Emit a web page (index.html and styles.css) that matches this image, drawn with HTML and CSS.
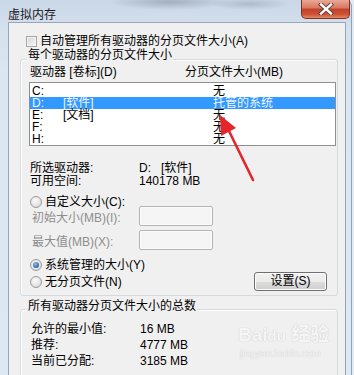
FILE: index.html
```html
<!DOCTYPE html>
<html lang="zh-CN">
<head>
    <meta charset="UTF-8">
    <meta name="viewport" content="width=device-width, initial-scale=1.0">
    <title>虚拟内存</title>
    <link rel="stylesheet" href="styles.css">
</head>
<body>
    <div class="window">
        <div class="titlebar">
            <span class="title">虚拟内存</span>
            <div class="close">
                <svg width="20" height="12" viewBox="0 0 20 12">
                    <path d="M5 1.5 L15 10.5 M15 1.5 L5 10.5" stroke="#5a3a36" stroke-width="4.2" stroke-linecap="square" fill="none"/>
                    <path d="M5 1.5 L15 10.5 M15 1.5 L5 10.5" stroke="#ffffff" stroke-width="2.4" stroke-linecap="square" fill="none"/>
                </svg>
            </div>
        </div>
        <div class="client">
            <div class="check-row">
                <span class="checkbox"></span>
                <span>自动管理所有驱动器的分页文件大小(A)</span>
            </div>

            <div class="group">
                <div class="group-title">每个驱动器的分页文件大小</div>
                <div class="list-head">
                    <span>驱动器 [卷标](D)</span>
                    <span>分页文件大小(MB)</span>
                </div>
                <div class="listbox">
                    <div class="item"><span>C:</span><span></span><span>无</span></div>
                    <div class="item selected"><span>D:</span><span>[软件]</span><span>托管的系统</span></div>
                    <div class="item"><span>E:</span><span>[文档]</span><span>无</span></div>
                    <div class="item"><span>F:</span><span></span><span>无</span></div>
                    <div class="item"><span>H:</span><span></span><span>无</span></div>
                </div>

                <div class="info">
                    <span>所选驱动器:</span><span>D:&nbsp;&nbsp;&nbsp;[软件]</span>
                    <span>可用空间:</span><span>140178 MB</span>
                </div>

                <div class="radio-row custom">
                    <span class="radio"></span>
                    <span>自定义大小(C):</span>
                </div>
                <div class="field-row">
                    <span class="field-label">初始大小(MB)(I):</span>
                    <span class="textbox"></span>
                </div>
                <div class="field-row second">
                    <span class="field-label">最大值(MB)(X):</span>
                    <span class="textbox"></span>
                </div>

                <div class="radio-row managed">
                    <span class="radio checked"></span>
                    <span>系统管理的大小(Y)</span>
                </div>
                <div class="button-row">
                    <div class="radio-row">
                        <span class="radio"></span>
                        <span>无分页文件(N)</span>
                    </div>
                    <div class="button">设置(S)</div>
                </div>
            </div>

            <div class="group totals">
                <div class="group-title">所有驱动器分页文件大小的总数</div>
                <div class="totals-list">
                    <span>允许的最小值:</span><span>16 MB</span>
                    <span>推荐:</span><span>4777 MB</span>
                    <span>当前已分配:</span><span>3185 MB</span>
                </div>
            </div>
        </div>
    </div>

    <!-- watermark -->
    <div class="watermark">
        <div class="wm-logo">Bai<span class="wm-du">du</span> 经验</div>
        <div class="wm-url">jingyan.baidu.com</div>
    </div>

    <!-- red arrow drawn over the screenshot -->
    <svg class="arrow" width="354" height="375" viewBox="0 0 354 375">
        <line x1="253" y1="180" x2="229" y2="131" stroke="#e3262b" stroke-width="2.6" stroke-linecap="round"/>
        <polygon points="220,115 236,128 221,136" fill="#e3262b"/>
    </svg>
</body>
</html>
```

FILE: styles.css
```css
body {
    margin: 0;
    padding: 0;
    width: 354px;
    height: 375px;
    overflow: hidden;
    position: relative;
    background: #e2eaf4;
    font-family: "Liberation Sans", "Noto Sans CJK SC", sans-serif;
    font-size: 12px;
    color: #000;
}

.window {
    width: 352px;
    height: 375px;
    box-sizing: border-box;
    border-right: 1px solid #8fa4bb;
    border-top-right-radius: 6px;
    background: linear-gradient(180deg, #c9d7e7 0%, #d6e1ee 8%, #dbe6f2 20%, #dde8f4 100%);
    display: flex;
    flex-direction: column;
}

.titlebar {
    height: 30px;
    display: flex;
    align-items: flex-start;
    justify-content: space-between;
    background:
        radial-gradient(ellipse 60px 8px at 170px 2px, rgba(90, 100, 115, 0.35), transparent),
        radial-gradient(ellipse 40px 6px at 250px 4px, rgba(90, 100, 115, 0.25), transparent);
}

.title {
    margin: 8px 0 0 8px;
    line-height: 14px;
    font-size: 12px;
    color: #1a1a1a;
}

.close {
    width: 49px;
    height: 19px;
    margin-right: 1px;
    box-sizing: border-box;
    border: 1px solid #7d3428;
    border-top: none;
    border-radius: 0 0 5px 5px;
    background: linear-gradient(180deg, #e9a797 0%, #d9775f 45%, #c0412c 50%, #cf5335 80%, #e28a62 100%);
    display: flex;
    align-items: center;
    justify-content: center;
}

.client {
    flex: 1;
    margin: 0 5px 0 8px;
    border: 1px solid #97a7b9;
    border-bottom: none;
    background: #f0f0f0;
    padding: 0 7px 0 11px;
}

.check-row {
    height: 14px;
    margin: 11px 0 0 6px;
    display: flex;
    align-items: center;
    gap: 3px;
    line-height: 14px;
}

.checkbox {
    width: 11px;
    height: 11px;
    box-sizing: border-box;
    border: 1px solid #a6a6a6;
    background: linear-gradient(135deg, #d6d6d6, #f6f6f6);
    box-shadow: inset 0 0 0 1px #f4f4f4;
}

.group {
    margin-top: 11px;
    border: 1px solid #d3dbe1;
    border-radius: 3px;
    box-shadow: inset 1px 1px 0 #fff;
    padding: 0 1px 4px 8px;
}

.group-title {
    width: fit-content;
    margin: -12px 0 0 -2px;
    padding: 0 1px;
    height: 14px;
    line-height: 14px;
    background: #f0f0f0;
}

.list-head {
    margin-top: 3px;
    padding-left: 1px;
    height: 14px;
    line-height: 14px;
    display: grid;
    grid-template-columns: 155px 1fr;
}

.listbox {
    margin-top: 3px;
    height: 64px;
    box-sizing: border-box;
    border: 1px solid #8e8f8f;
    background: #fff;
    padding-top: 2px;
}

.item {
    height: 12px;
    line-height: 12px;
    padding-left: 2px;
    display: grid;
    grid-template-columns: 31px 150px 1fr;
}

.item.selected {
    background: #3399ff;
    color: #eef6ff;
}

.info {
    margin-top: 16px;
    padding-left: 1px;
    display: grid;
    grid-template-columns: 109px 1fr;
    grid-auto-rows: 13px;
    line-height: 13px;
}

.radio-row {
    height: 14px;
    line-height: 14px;
    display: flex;
    align-items: center;
    gap: 3px;
    padding-left: 1px;
}

.radio-row.custom {
    margin-top: 7px;
}

.radio-row.managed {
    margin-top: 8px;
}

.radio {
    width: 12px;
    height: 12px;
    box-sizing: border-box;
    border-radius: 50%;
    border: 1px solid #9a9a9a;
    background: radial-gradient(circle at 40% 35%, #fbfbfb, #d4d4d4);
    display: flex;
    align-items: center;
    justify-content: center;
}

.radio.checked::after {
    content: "";
    width: 6px;
    height: 6px;
    border-radius: 50%;
    background: radial-gradient(circle at 40% 35%, #8fc3ea, #1d5a8e 80%);
}

.field-row {
    margin-top: -3px;
    height: 20px;
    display: grid;
    grid-template-columns: 110px 74px;
    align-items: center;
}

.field-row.second {
    margin-top: 4px;
}

.field-label {
    padding-left: 3px;
    color: #8d8d8d;
    line-height: 14px;
    padding-top: 4px;
}

.textbox {
    height: 20px;
    box-sizing: border-box;
    border: 1px solid #b4b4b4;
    border-radius: 2px;
    background: #f5f5f5;
    box-shadow: inset 0 0 0 1px #fbfbfb;
}

.button-row {
    height: 19px;
    display: flex;
    align-items: center;
    justify-content: space-between;
    padding-right: 9px;
}

.button {
    width: 73px;
    height: 19px;
    box-sizing: border-box;
    border: 1px solid #707070;
    border-radius: 3px;
    background: linear-gradient(180deg, #f2f2f2 0%, #ebebeb 50%, #dddddd 51%, #cfcfcf 100%);
    box-shadow: inset 0 0 0 1px #fcfcfc;
    text-align: center;
    line-height: 17px;
}

.group.totals {
    margin-top: 13px;
    height: 80px;
    padding-bottom: 0;
}

.group.totals .group-title {
    margin-top: -11px;
}

.totals-list {
    margin-top: 8px;
    padding-left: 2px;
    display: grid;
    grid-template-columns: 109px 1fr;
    grid-auto-rows: 16px;
    line-height: 16px;
}

.watermark {
    position: absolute;
    left: 238px;
    top: 324px;
    color: #f5f5f5;
    text-shadow: 0 0 1px #d0d0d0, 0 0 1px #d0d0d0;
    font-family: "Liberation Sans", "Noto Sans CJK SC", sans-serif;
}

.wm-logo {
    font-size: 19px;
    font-weight: bold;
    line-height: 22px;
}

.wm-du {
    font-size: 15px;
}

.wm-url {
    font-size: 10px;
    line-height: 14px;
    padding-left: 2px;
}

.arrow {
    position: absolute;
    left: 0;
    top: 0;
    pointer-events: none;
}
```
